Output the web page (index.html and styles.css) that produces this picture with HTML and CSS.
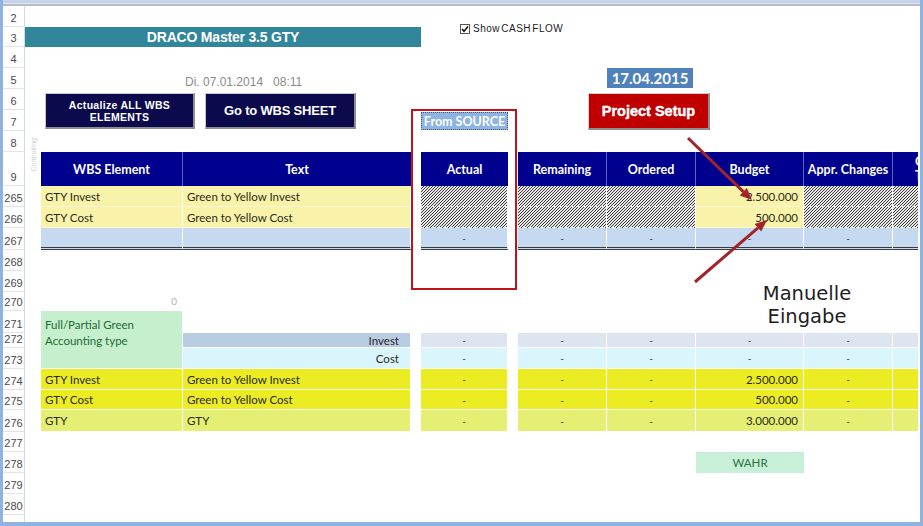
FILE: index.html
```html
<!DOCTYPE html>
<html lang="de">
<head>
<meta charset="utf-8">
<title>DRACO Master 3.5 GTY</title>
<link rel="stylesheet" href="styles.css">
</head>
<body>
<div class="window">
  <div class="topstrip"></div>
  <div class="sheet">
    <div class="grid">
      <div class="rowheads">
        <div class="rh">2</div><div class="rh">3</div><div class="rh">4</div><div class="rh">5</div>
        <div class="rh">6</div><div class="rh">7</div><div class="rh">8</div><div class="rh">9</div>
        <div class="rh">265</div><div class="rh">266</div><div class="rh">267</div><div class="rh">268</div>
        <div class="rh">269</div><div class="rh">270</div><div class="rh">271</div><div class="rh">272</div>
        <div class="rh">273</div><div class="rh">274</div><div class="rh">275</div><div class="rh">276</div>
        <div class="rh">277</div><div class="rh">278</div><div class="rh">279</div><div class="rh">280</div>
        <div class="rh rh-rest"></div>
      </div>

      <!-- top area -->
      <div class="title">DRACO Master 3.5 GTY</div>
      <div class="showcf">
        <svg class="chk" width="10" height="10" viewBox="0 0 10 10"><rect x="0.5" y="0.5" width="9" height="9" fill="#fff" stroke="#555"/><path d="M2 5 L4 7.3 L8 2.6" fill="none" stroke="#111" stroke-width="1.6"/></svg>
        <span>Show CASH FLOW</span>
      </div>
      <div class="datestamp">Di. 07.01.2014&nbsp;&nbsp;&nbsp;08:11</div>
      <div class="datebox">17.04.2015</div>
      <div class="btn btn-actualize">Actualize ALL WBS<br>ELEMENTS</div>
      <div class="btn btn-goto">Go to WBS SHEET</div>
      <div class="btn-setup">Project Setup</div>
      <div class="from-source">From SOURCE</div>
      <div class="vlabel">Controlling</div>

      <!-- header row 9 -->
      <div class="hdr r9 col-wbs">WBS Element</div>
      <div class="hdr r9 col-text">Text</div>
      <div class="hdr r9 col-act">Actual</div>
      <div class="hdr r9 col-rem">Remaining</div>
      <div class="hdr r9 col-ord">Ordered</div>
      <div class="hdr r9 col-bud">Budget</div>
      <div class="hdr r9 col-appr">Appr. Changes</div>
      <div class="hdr r9 col-last hdr-last">Current<br>Total</div>

      <!-- row 265 -->
      <div class="cell ypale r265 col-wbs">GTY Invest</div>
      <div class="cell ypale r265 col-text">Green to Yellow Invest</div>
      <div class="cell hatch r265 col-act"></div>
      <div class="cell hatch r265 col-rem"></div>
      <div class="cell hatch r265 col-ord"></div>
      <div class="cell ypale num r265 col-bud">2.500.000</div>
      <div class="cell hatch r265 col-appr"></div>
      <div class="cell hatch r265 col-last"></div>

      <!-- row 266 -->
      <div class="cell ypale r266 col-wbs">GTY Cost</div>
      <div class="cell ypale r266 col-text">Green to Yellow Cost</div>
      <div class="cell hatch r266 col-act"></div>
      <div class="cell hatch r266 col-rem"></div>
      <div class="cell hatch r266 col-ord"></div>
      <div class="cell ypale num r266 col-bud">500.000</div>
      <div class="cell hatch r266 col-appr"></div>
      <div class="cell hatch r266 col-last"></div>

      <!-- row 267 -->
      <div class="cell sum r267 col-wbs"></div>
      <div class="cell sum r267 col-text"></div>
      <div class="cell sum dash r267 col-act">-</div>
      <div class="cell sum dash r267 col-rem">-</div>
      <div class="cell sum dash r267 col-ord">-</div>
      <div class="cell sum dash r267 col-bud">-</div>
      <div class="cell sum dash r267 col-appr">-</div>
      <div class="cell sum r267 col-last"></div>

      <!-- row 270 -->
      <div class="cell zero num r270 col-wbs">0</div>

      <!-- rows 271-273 -->
      <div class="greenblock"><span>Full/Partial Green</span><span>Accounting type</span></div>
      <div class="cell invest num r272 col-text">Invest</div>
      <div class="cell lav dash r272 col-act">-</div>
      <div class="cell lav dash r272 col-rem">-</div>
      <div class="cell lav dash r272 col-ord">-</div>
      <div class="cell lav dash r272 col-bud">-</div>
      <div class="cell lav dash r272 col-appr">-</div>
      <div class="cell lav r272 col-last"></div>

      <div class="cell cyan num r273 col-text">Cost</div>
      <div class="cell cyan dash r273 col-act">-</div>
      <div class="cell cyan dash r273 col-rem">-</div>
      <div class="cell cyan dash r273 col-ord">-</div>
      <div class="cell cyan dash r273 col-bud">-</div>
      <div class="cell cyan dash r273 col-appr">-</div>
      <div class="cell cyan r273 col-last"></div>

      <!-- rows 274-276 -->
      <div class="cell ybright r274 col-wbs">GTY Invest</div>
      <div class="cell ybright r274 col-text">Green to Yellow Invest</div>
      <div class="cell ybright dash r274 col-act">-</div>
      <div class="cell ybright dash r274 col-rem">-</div>
      <div class="cell ybright dash r274 col-ord">-</div>
      <div class="cell ybright num r274 col-bud">2.500.000</div>
      <div class="cell ybright dash r274 col-appr">-</div>
      <div class="cell ybright r274 col-last"></div>

      <div class="cell ybright r275 col-wbs">GTY Cost</div>
      <div class="cell ybright r275 col-text">Green to Yellow Cost</div>
      <div class="cell ybright dash r275 col-act">-</div>
      <div class="cell ybright dash r275 col-rem">-</div>
      <div class="cell ybright dash r275 col-ord">-</div>
      <div class="cell ybright num r275 col-bud">500.000</div>
      <div class="cell ybright dash r275 col-appr">-</div>
      <div class="cell ybright r275 col-last"></div>

      <div class="cell ylight r276 col-wbs">GTY</div>
      <div class="cell ylight r276 col-text">GTY</div>
      <div class="cell ylight dash r276 col-act">-</div>
      <div class="cell ylight dash r276 col-rem">-</div>
      <div class="cell ylight dash r276 col-ord">-</div>
      <div class="cell ylight num r276 col-bud">3.000.000</div>
      <div class="cell ylight dash r276 col-appr">-</div>
      <div class="cell ylight r276 col-last"></div>

      <!-- row 278 -->
      <div class="cell wahr r278 col-bud">WAHR</div>

      <!-- annotations -->
      <div class="manual">Manuelle<br>Eingabe</div>
      <div class="redbox"></div>
    </div>
  </div>

  <svg class="arrows" width="923" height="526" viewBox="0 0 923 526">
    <g fill="#a1242b" stroke="#a1242b">
      <line x1="688" y1="138" x2="743.5" y2="191.8" stroke-width="3"/>
      <polygon points="752,200 739.8,195.4 746.8,188" stroke="none"/>
      <line x1="695" y1="282" x2="758" y2="227.8" stroke-width="3"/>
      <polygon points="767,220 761.2,231.6 754.6,224" stroke="none"/>
    </g>
  </svg>
</div>
</body>
</html>
```

FILE: styles.css
```css
* { box-sizing: border-box; margin: 0; padding: 0; }

:root {
  --rows: 21px 20px 21px 21px 21px 21px 21px 34px 21px 21px 22px 21px 21px 19px 22px 15px 21px 21px 20px 22px 20px 21px 21px 21px 1fr;
}

body {
  width: 923px;
  height: 526px;
  overflow: hidden;
  background: #fff;
  font-family: "Liberation Sans", Arial, sans-serif;
}

.window {
  position: relative;
  width: 923px;
  height: 526px;
  display: flex;
  flex-direction: column;
  background: #fff;
  border-left: 3px solid #8fb3e0;
  border-right: 3px solid #8fb3e0;
  border-bottom: 4px solid #8fb3e0;
}

.topstrip {
  flex: none;
  height: 6px;
  background: linear-gradient(#c3d4ea 0 3px, #e4e6ea 3px 4px, #b6bcc6 4px);
}

.sheet {
  flex: 1;
  overflow: hidden;
  margin-right: 2px;
}

.grid {
  display: grid;
  grid-template-columns: 22px 16px 142px 228px 10px 87px 10px 89px 89px 108px 89px 90px;
  grid-template-rows: var(--rows);
  width: 980px;
  height: 100%;
}

/* row headers */
.rowheads {
  grid-column: 1;
  grid-row: 1 / -1;
  display: grid;
  grid-template-rows: var(--rows);
  border-right: 1px solid #d3d9e3;
}
.rh {
  display: flex;
  align-items: flex-end;
  justify-content: center;
  font-size: 11px;
  line-height: 13px;
  color: #4a4a4a;
  border-bottom: 1px solid #e4e4e4;
  padding-bottom: 1px;
}
.rh-rest { border-bottom: none; }

/* rows */
.r9 { grid-row: 8; }
.r265 { grid-row: 9; }
.r266 { grid-row: 10; }
.r267 { grid-row: 11; }
.r270 { grid-row: 14; }
.r272 { grid-row: 16; }
.r273 { grid-row: 17; }
.r274 { grid-row: 18; }
.r275 { grid-row: 19; }
.r276 { grid-row: 20; }
.r278 { grid-row: 22; }

/* columns */
.col-wbs { grid-column: 3; }
.col-text { grid-column: 4; }
.col-act { grid-column: 6; }
.col-rem { grid-column: 8; }
.col-ord { grid-column: 9; }
.col-bud { grid-column: 10; }
.col-appr { grid-column: 11; }
.col-last { grid-column: 12; }

/* top area */
.title {
  grid-row: 2;
  grid-column: 2 / 6;
  background: #31869b;
  color: #fff;
  font-weight: bold;
  font-size: 14px;
  letter-spacing: -0.2px;
  display: flex;
  align-items: center;
  justify-content: center;
}

.showcf {
  grid-row: 1 / 3;
  grid-column: 6 / 10;
  align-self: start;
  margin: 18px 0 0 39px;
  display: flex;
  align-items: center;
  gap: 3px;
  font-size: 10px;
  line-height: 10px;
  letter-spacing: 0.5px;
  word-spacing: -2px;
  color: #222;
}
.chk { flex: none; }

.datestamp {
  grid-row: 4;
  grid-column: 4;
  align-self: end;
  padding-left: 2px;
  font-size: 12px;
  color: #8a8a8a;
  line-height: 13px;
  white-space: nowrap;
}

.datebox {
  grid-row: 4;
  grid-column: 9;
  margin: 0 3px 1px 0;
  background: #4f81bd;
  color: #fff;
  font-family: Lato, "Liberation Sans", sans-serif;
  font-weight: bold;
  font-size: 15px;
  display: flex;
  align-items: center;
  justify-content: center;
}

.btn {
  grid-row: 5 / 7;
  align-self: start;
  justify-self: start;
  margin-top: 4px;
  height: 36px;
  background: #0a0a4c;
  color: #fff;
  font-weight: bold;
  text-align: center;
  display: flex;
  align-items: center;
  justify-content: center;
  border-top: 1px solid #c9c9c9;
  border-left: 1px solid #c9c9c9;
  border-right: 2px solid #8e8e8e;
  border-bottom: 2px solid #8e8e8e;
}
.btn-actualize {
  grid-column: 3 / 5;
  margin-left: 4px;
  width: 150px;
  font-size: 10.5px;
  line-height: 12px;
  letter-spacing: 0.3px;
}
.btn-goto {
  grid-column: 4;
  margin-left: 22px;
  width: 151px;
  font-size: 13px;
  letter-spacing: -0.2px;
}

.btn-setup {
  grid-row: 5 / 7;
  grid-column: 8 / 11;
  align-self: start;
  justify-self: start;
  margin: 4px 0 0 70px;
  width: 122px;
  height: 37px;
  background: #c00000;
  color: #fff;
  font-weight: bold;
  font-size: 14.5px;
  -webkit-text-stroke: 0.4px #fff;
  display: flex;
  align-items: center;
  justify-content: center;
  border-right: 2px solid #8e8e8e;
  border-bottom: 2px solid #8e8e8e;
  border-top: 1px solid #d0d0d0;
  border-left: 1px solid #d0d0d0;
}

.from-source {
  grid-row: 6;
  grid-column: 6;
  margin-top: 2px;
  height: 18px;
  background: #8db4e2;
  color: #fff;
  font-family: Lato, "Liberation Sans", sans-serif;
  font-weight: bold;
  font-size: 12.5px;
  display: flex;
  align-items: center;
  justify-content: center;
  border: 1px dotted #4a5a70;
}

.vlabel {
  grid-row: 7 / 9;
  grid-column: 2;
  justify-self: center;
  align-self: start;
  margin-top: 7px;
  writing-mode: vertical-rl;
  transform: rotate(180deg);
  font-size: 7px;
  color: #cfcfcf;
}

/* header */
.hdr {
  background: #00008f;
  color: #fff;
  font-family: Lato, "Liberation Sans", sans-serif;
  font-weight: bold;
  font-size: 12.5px;
  display: flex;
  align-items: center;
  justify-content: center;
  text-align: center;
  border-right: 1px solid #5465c8;
}
.hdr.col-text, .hdr.col-act { border-right: none; }
.hdr-last {
  justify-content: flex-start;
  text-align: left;
  padding-left: 22px;
  line-height: 14px;
}

/* cells */
.cell {
  display: flex;
  align-items: center;
  padding: 0 4px;
  font-family: Lato, "Liberation Sans", sans-serif;
  font-size: 11.5px;
  color: #2a2a1c;
  white-space: nowrap;
  overflow: hidden;
  border-right: 1px solid #fff;
  border-bottom: 1px solid #fff;
}
.num { justify-content: flex-end; padding-right: 5px; }
.dash { justify-content: center; font-size: 10px; color: #333; }

.ypale { background: #f9f3a9; border-bottom: 1px solid #fbf7d4; }
.hatch {
  background-color: #e6e6e6;
  background-image: linear-gradient(135deg, #3c3c3c 16%, transparent 16% 50%, #3c3c3c 50% 66%, transparent 66%);
  background-size: 3px 3px;
  border-bottom: 1px dotted #fff;
}
.sum {
  background: #c5d9f1;
  border-bottom: 3px double #3a3a3a;
}
.zero { color: #b0b0b0; font-size: 10px; }

.greenblock {
  grid-row: 15 / 18;
  grid-column: 3;
  background: #c6efce;
  color: #1e6b34;
  font-family: Lato, "Liberation Sans", sans-serif;
  font-size: 11.5px;
  line-height: 16px;
  display: flex;
  flex-direction: column;
  padding: 6px 4px 0;
  border-right: 1px solid #fff;
  border-bottom: 1px solid #fff;
}

.invest { background: #b8cce4; padding-right: 11px; }
.lav { background: #dde5f0; }
.cyan { background: #daf5fc; }
.cyan.num { padding-right: 11px; }
.ybright { background: #ecec22; }
.ylight { background: #e5ef73; }

.wahr {
  background: #c8efd8;
  color: #2a7545;
  justify-content: center;
  border: none;
}

/* annotations */
.manual {
  grid-row: 12 / 16;
  grid-column: 10 / 12;
  align-self: start;
  margin-top: 32px;
  padding-left: 25px;
  text-align: center;
  font-family: "DejaVu Sans", Verdana, sans-serif;
  font-size: 19.5px;
  line-height: 23px;
  color: #1e1e1e;
  white-space: nowrap;
}

.redbox {
  grid-row: 6 / 14;
  grid-column: 5 / 8;
  margin: -1px 1px 2px 0;
  border: 2px solid #c0141c;
  pointer-events: none;
  z-index: 2;
}

.arrows {
  position: absolute;
  left: -3px;
  top: 0;
  pointer-events: none;
  z-index: 5;
}
```
